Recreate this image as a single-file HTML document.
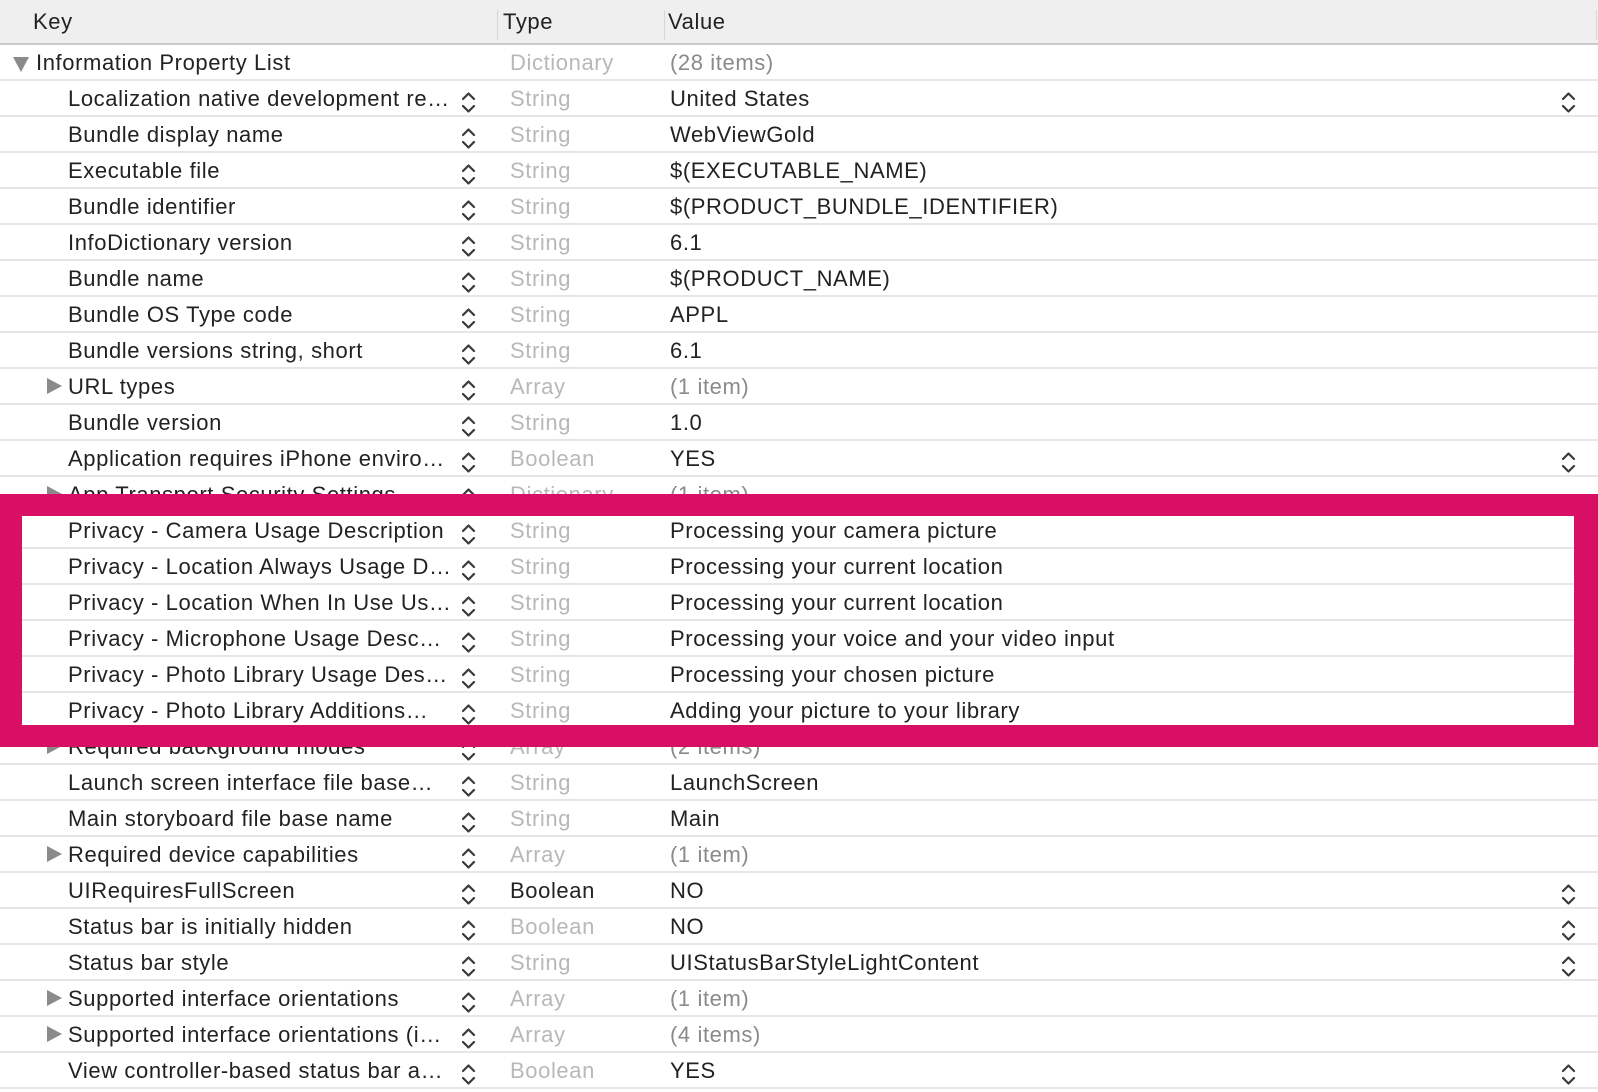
<!DOCTYPE html>
<html><head><meta charset="utf-8"><style>
*{margin:0;padding:0;box-sizing:border-box}
body{width:1598px;height:1092px;overflow:hidden;background:#fff;font-family:"Liberation Sans",Helvetica,Arial,sans-serif;font-size:22px;letter-spacing:0.6px;color:#222;position:relative}
.hdr{position:absolute;left:0;top:0;width:1598px;height:45px;background:#efefef;border-bottom:2px solid #c9c9c9}
.hdr span{position:absolute;top:9px;font-size:22px;color:#222}
.div{position:absolute;top:10px;width:1px;height:30px;background:#d6d6d6}
.row{position:absolute;left:0;width:1598px;height:36px;border-bottom:2px solid #e6e6e6}
.row .k{position:absolute;left:68px;top:5px;white-space:nowrap}
.row .t{position:absolute;left:510px;top:5px;color:#b8b8b8}
.row .t.d{color:#222}
.row .v{position:absolute;left:670px;top:5px;white-space:nowrap}
.row .v.g{color:#8a8a8a}
.tri{position:absolute;left:47px;top:9px;width:0;height:0;border-top:8px solid transparent;border-bottom:8px solid transparent;border-left:15px solid #8a8a8a}
.trid{position:absolute;left:13px;top:12px;width:0;height:0;border-left:8px solid transparent;border-right:8px solid transparent;border-top:15px solid #8a8a8a}
svg.ch{position:absolute;top:10px}
.pink{position:absolute;left:0;top:494px;width:1598px;height:253px;border:22px solid #d80f64;border-left-width:22px;border-right-width:24px}
</style></head><body>
<div class="hdr"><span style="left:33px">Key</span><div class="div" style="left:497px"></div><span style="left:503px">Type</span><div class="div" style="left:664px"></div><span style="left:668px">Value</span><div class="div" style="left:1596px"></div></div>
<div id="rows"></div>
<script>
var R=[
["Information Property List","Dictionary","(28 items)",0,1,0,0,1,0],
["Localization native development re…","String","United States",1,0,0,1],
["Bundle display name","String","WebViewGold",1],
["Executable file","String","$(EXECUTABLE_NAME)",1],
["Bundle identifier","String","$(PRODUCT_BUNDLE_IDENTIFIER)",1],
["InfoDictionary version","String","6.1",1],
["Bundle name","String","$(PRODUCT_NAME)",1],
["Bundle OS Type code","String","APPL",1],
["Bundle versions string, short","String","6.1",1],
["URL types","Array","(1 item)",1,0,1,0,1],
["Bundle version","String","1.0",1],
["Application requires iPhone enviro…","Boolean","YES",1,0,0,1],
["App Transport Security Settings","Dictionary","(1 item)",1,0,1,0,1],
["Privacy - Camera Usage Description","String","Processing your camera picture",1],
["Privacy - Location Always Usage D…","String","Processing your current location",1],
["Privacy - Location When In Use Us…","String","Processing your current location",1],
["Privacy - Microphone Usage Desc…","String","Processing your voice and your video input",1],
["Privacy - Photo Library Usage Des…","String","Processing your chosen picture",1],
["Privacy - Photo Library Additions…","String","Adding your picture to your library",1],
["Required background modes","Array","(2 items)",1,0,1,0,1],
["Launch screen interface file base…","String","LaunchScreen",1],
["Main storyboard file base name","String","Main",1],
["Required device capabilities","Array","(1 item)",1,0,1,0,1],
["UIRequiresFullScreen","Boolean","NO",1,0,0,1,0,1],
["Status bar is initially hidden","Boolean","NO",1,0,0,1],
["Status bar style","String","UIStatusBarStyleLightContent",1,0,0,1],
["Supported interface orientations","Array","(1 item)",1,0,1,0,1],
["Supported interface orientations (i…","Array","(4 items)",1,0,1,0,1],
["View controller-based status bar a…","Boolean","YES",1,0,0,1]
];
var ch='<path d="M1 8 L6.5 2.5 L12 8 M1 15 L6.5 20.5 L12 15" fill="none" stroke="#3a3a3a" stroke-width="2.2" stroke-linecap="round" stroke-linejoin="round"/>';
var h='';
R.forEach(function(r,i){
 var top=45+36*i;
 h+='<div class="row" style="top:'+top+'px">';
 if(r[4])h+='<div class="trid"></div><div class="k" style="left:36px">'+r[0]+'</div>';
 else h+=(r[5]?'<div class="tri"></div>':'')+'<div class="k">'+r[0]+'</div>';
 if(r[3])h+='<svg class="ch" style="left:462px" width="14" height="23">'+ch+'</svg>';
 h+='<div class="t'+(r[8]?' d':'')+'">'+r[1]+'</div>';
 h+='<div class="v'+(r[7]?' g':'')+'">'+r[2]+'</div>';
 if(r[6])h+='<svg class="ch" style="left:1562px" width="14" height="23">'+ch+'</svg>';
 h+='</div>';
});
document.getElementById('rows').innerHTML=h;
</script>
<div class="pink"></div>
</body></html>
